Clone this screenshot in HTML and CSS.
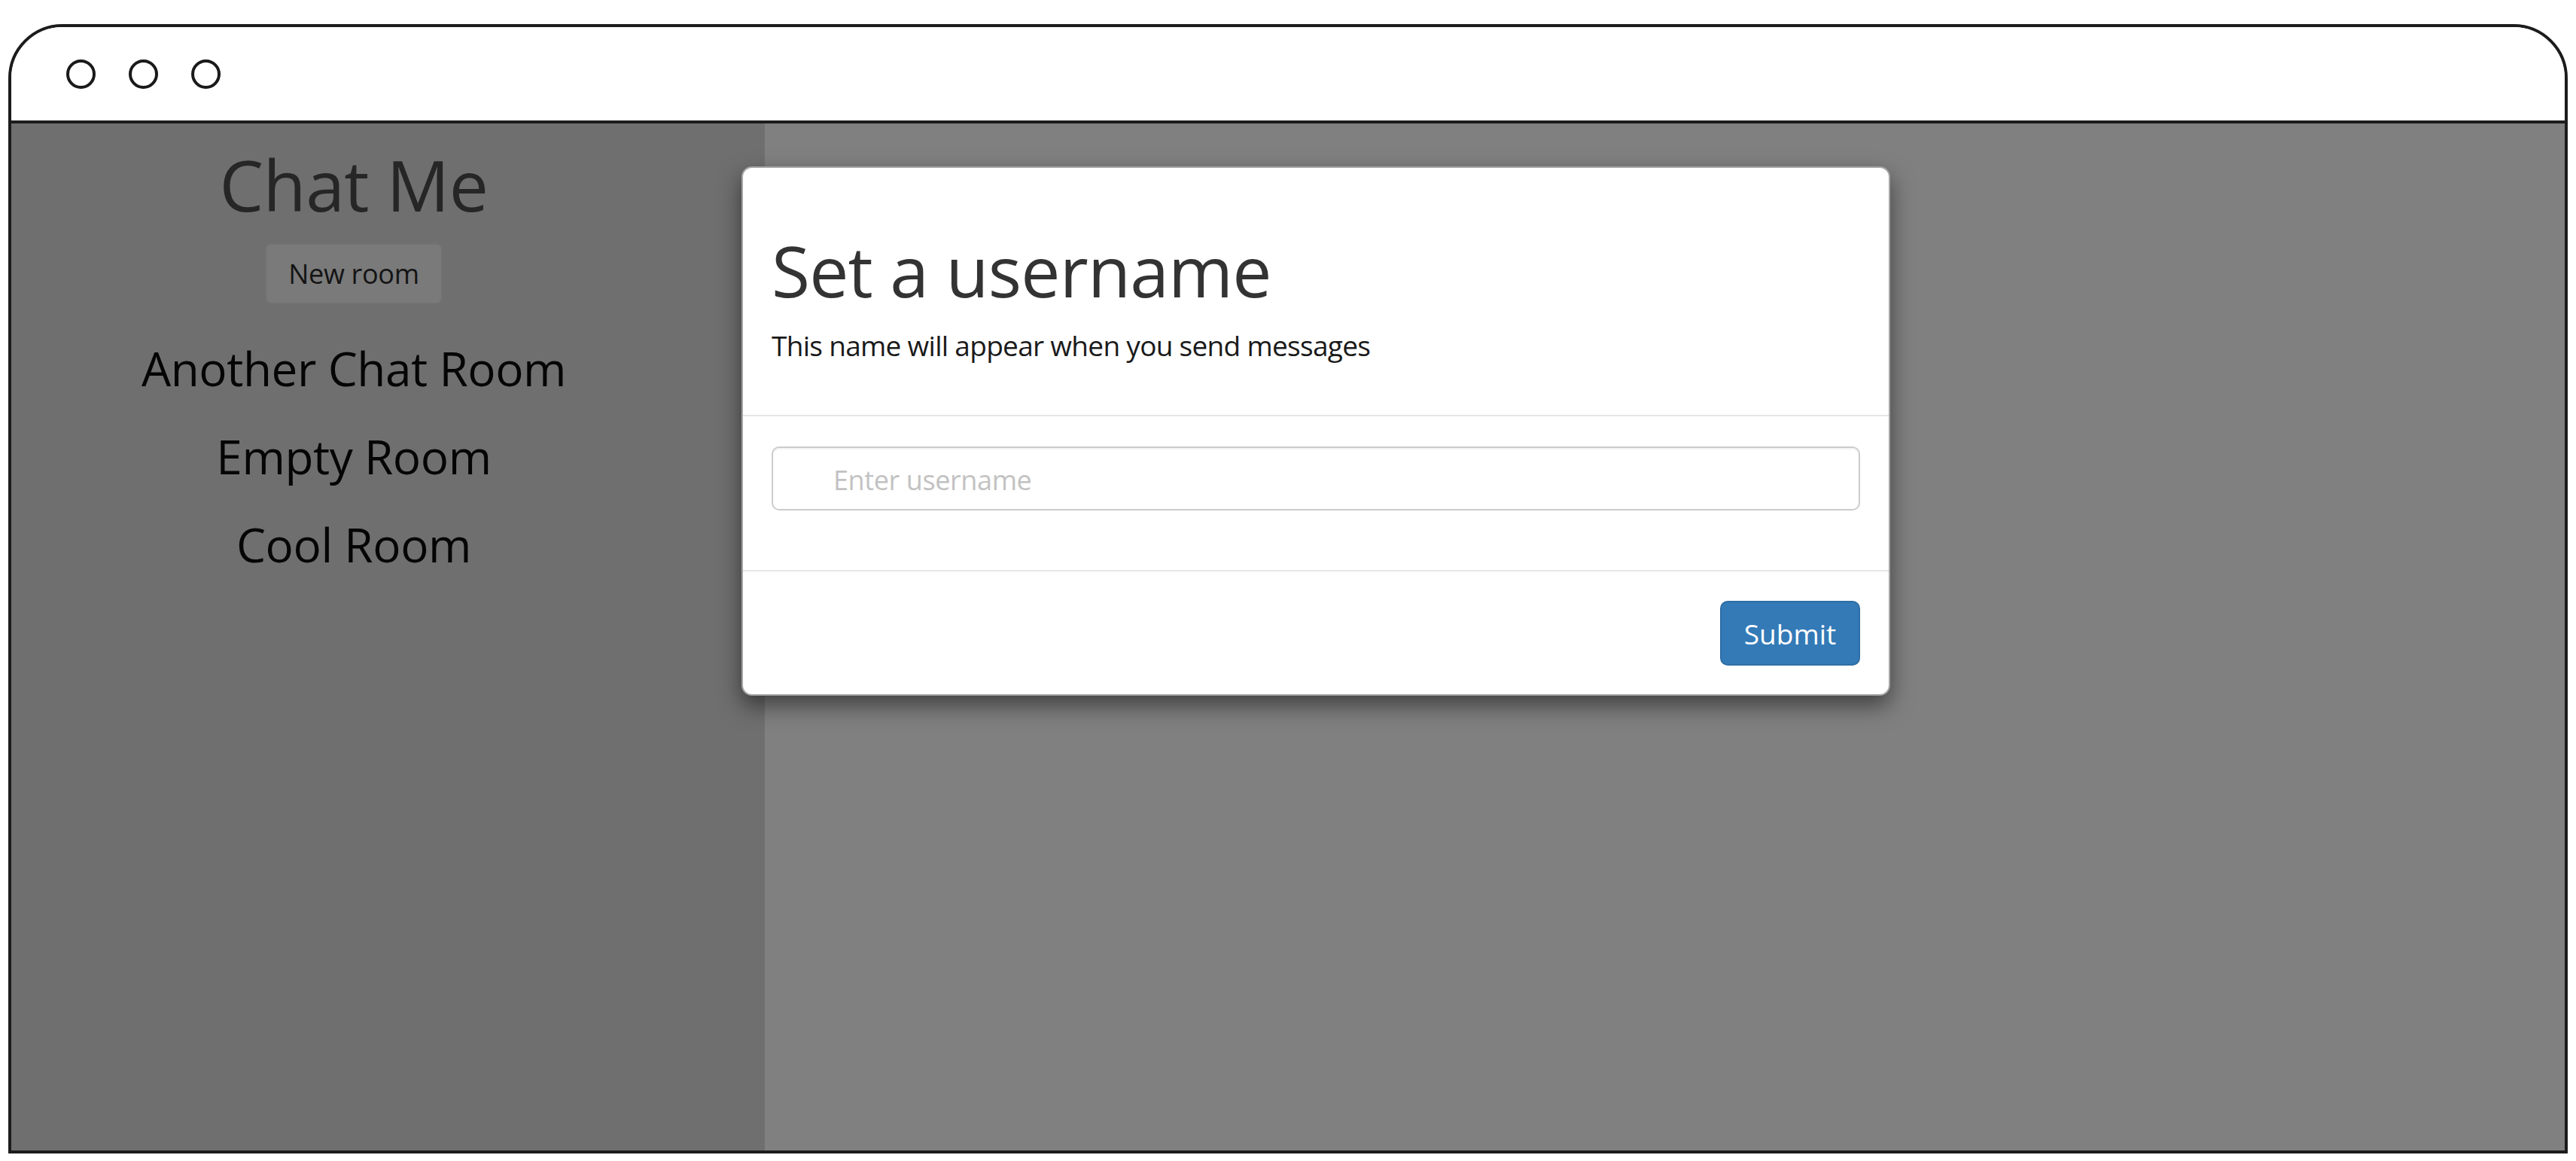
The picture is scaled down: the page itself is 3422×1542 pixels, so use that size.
FILE: index.html
```html
<!DOCTYPE html>
<html lang="en">
<head>
<meta charset="utf-8">
<title>Chat Me</title>
<link rel="stylesheet" href="styles.css">
</head>
<body>
<div class="window">
  <div class="titlebar">
    <span class="dot"></span>
    <span class="dot"></span>
    <span class="dot"></span>
  </div>
  <div class="content">
    <aside class="sidebar">
      <h1 class="brand">Chat Me</h1>
      <button class="btn-new" type="button">New room</button>
      <ul class="rooms">
        <li>Another Chat Room</li>
        <li>Empty Room</li>
        <li>Cool Room</li>
      </ul>
    </aside>
    <main class="main"></main>
    <div class="modal">
      <div class="modal-header">
        <h1 class="modal-title">Set a username</h1>
        <p class="modal-sub">This name will appear when you send messages</p>
      </div>
      <div class="modal-body">
        <input class="field" type="text" placeholder="Enter username">
      </div>
      <div class="modal-footer">
        <button class="btn-submit" type="button">Submit</button>
      </div>
    </div>
  </div>
</div>
</body>
</html>
```

FILE: styles.css
```css
* { box-sizing: border-box; }

html, body {
  margin: 0;
  padding: 0;
  background: #ffffff;
  font-family: "Open Sans", "Noto Sans", sans-serif;
}

.window {
  margin: 32px 0 0 11px;
  width: 3400px;
  height: 1500px;
  border: 4px solid #1c1c1c;
  border-radius: 72px 72px 0 0;
  overflow: hidden;
  display: flex;
  flex-direction: column;
  background: #ffffff;
}

.titlebar {
  height: 128px;
  flex: none;
  border-bottom: 4px solid #1c1c1c;
  display: flex;
  align-items: center;
  gap: 44px;
  padding: 0 0 0 73px;
  background: #ffffff;
}

.dot {
  width: 39px;
  height: 39px;
  border: 4.5px solid #1a1a1a;
  border-radius: 50%;
  display: block;
}

.content {
  position: relative;
  flex: 1;
  display: flex;
}

.sidebar {
  width: 1001px;
  flex: none;
  background: #6f6f6f;
  padding: 30px 91px 0 0;
  text-align: center;
}

.brand {
  margin: 0;
  font-size: 93px;
  font-weight: 400;
  line-height: 1.1;
  color: #262626;
  letter-spacing: -0.5px;
}

.btn-new {
  margin-top: 27px;
  height: 81px;
  width: 236px;
  padding: 0;
  background: #7a7a7a;
  border: 2px solid #727272;
  border-radius: 8px;
  font-family: "Open Sans", "Noto Sans", sans-serif;
  font-size: 36px;
  color: #141414;
  letter-spacing: -0.3px;
}

.rooms {
  list-style: none;
  margin: 27px 0 0;
  padding: 0;
  font-size: 62px;
  line-height: 117px;
  color: #050505;
  letter-spacing: -0.4px;
}

.main {
  flex: 1;
  background: #808080;
}

.modal {
  position: absolute;
  left: 970px;
  top: 57px;
  width: 1526px;
  background: #ffffff;
  border: 2.5px solid rgba(0, 0, 0, 0.35);
  border-radius: 14px;
  box-shadow: 0 13px 30px rgba(0, 0, 0, 0.5);
}

.modal-header {
  padding: 38px;
  border-bottom: 2px solid #e5e5e5;
}

.modal-title {
  margin: 47px 0 23px;
  font-size: 93px;
  font-weight: 400;
  line-height: 1.1;
  color: #333333;
  letter-spacing: -0.8px;
}

.modal-sub {
  margin: 0 0 27px;
  font-size: 37px;
  line-height: 1.42857;
  color: #1a1a1a;
  letter-spacing: -0.7px;
}

.modal-body {
  padding: 40px 38px 79px;
}

.field {
  display: block;
  width: 100%;
  height: 85px;
  border: 2px solid #cccccc;
  border-radius: 10px;
  padding: 3px 20px 0 80px;
  font-family: "Open Sans", "Noto Sans", sans-serif;
  font-size: 36px;
  color: #555555;
  background: #ffffff;
  box-shadow: inset 0 2px 2px rgba(0, 0, 0, 0.05);
  letter-spacing: -0.4px;
}

.field::placeholder {
  color: #c2c2c2;
}

.modal-footer {
  padding: 39px 38px 38px;
  border-top: 2px solid #e5e5e5;
  text-align: right;
}

.btn-submit {
  height: 86px;
  width: 186px;
  padding: 0;
  background: #337ab7;
  border: 2px solid #2e6da4;
  border-radius: 10px;
  font-family: "Open Sans", "Noto Sans", sans-serif;
  font-size: 37px;
  color: #ffffff;
}
```
